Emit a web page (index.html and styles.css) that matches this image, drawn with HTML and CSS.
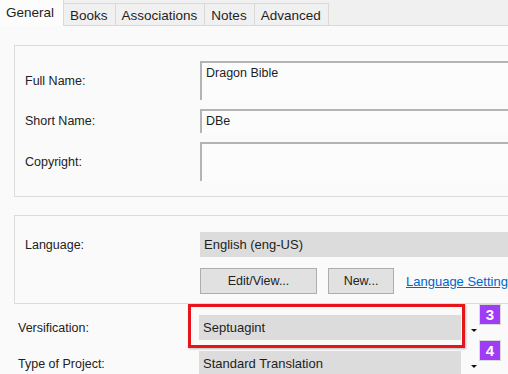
FILE: index.html
```html
<!DOCTYPE html>
<html lang="en">
<head>
  <meta charset="UTF-8" />
  <meta name="viewport" content="width=device-width, initial-scale=1.0"/>
  <title>Project Properties</title>
  <link rel="stylesheet" href="styles.css">
</head>
<body>
  <div class="window">
    <div class="tabs">
      <div class="tab active">General</div>
      <div class="tab">Books</div>
      <div class="tab">Associations</div>
      <div class="tab">Notes</div>
      <div class="tab">Advanced</div>
    </div>

    <div class="panel">
      <div class="group names">
        <div class="row">
          <label>Full Name:</label>
          <div class="textbox tall">Dragon Bible</div>
        </div>
        <div class="row">
          <label>Short Name:</label>
          <div class="textbox">DBe</div>
        </div>
        <div class="row">
          <label>Copyright:</label>
          <div class="textbox tall"></div>
        </div>
      </div>

      <div class="group language">
        <div class="row">
          <label>Language:</label>
          <div class="readonly">English (eng-US)</div>
        </div>
        <div class="row">
          <span></span>
          <div class="actions">
            <button class="btn edit">Edit/View...</button>
            <button class="btn">New...</button>
            <a href="#" class="link">Language Settings</a>
          </div>
        </div>
      </div>

      <div class="row outside">
        <label>Versification:</label>
        <div class="combo">
          <div class="readonly field highlight">Septuagint</div>
          <span class="arrow"></span>
          <span class="badge">3</span>
        </div>
      </div>
      <div class="row outside">
        <label>Type of Project:</label>
        <div class="combo">
          <div class="readonly field">Standard Translation</div>
          <span class="arrow"></span>
          <span class="badge">4</span>
        </div>
      </div>
    </div>
  </div>
</body>
</html>
```

FILE: styles.css
```css
* { box-sizing: border-box; }

html, body {
  margin: 0;
  width: 508px;
  height: 374px;
  overflow: hidden;
}

body {
  font-family: 'Liberation Sans', Arial, sans-serif;
  font-size: 12px;
  color: #1e1e1e;
  background: #fafafa;
}

.window {
  width: 508px;
}

/* tab strip */
.tabs {
  display: flex;
  align-items: flex-end;
  height: 26px;
  background: #f0f0f0;
  border-bottom: 1px solid #d9d9d9;
}

.tab {
  height: 23px;
  padding: 4px 7px 0 6px;
  margin-bottom: -1px;
  border: 1px solid #d9d9d9;
  border-left: none;
  background: #f0f0f0;
  font-size: 13.5px;
}

.tab.active {
  height: 26px;
  padding: 5px 9px 0 6px;
  background: #fcfcfc;
  border: none;
  border-right: 1px solid #d9d9d9;
  font-size: 13.5px;
}

/* page body */
.panel {
  padding: 19px 0 0 14px;
}

.group {
  width: 560px;
  border: 1px solid #dcdcdc;
  padding: 15px 0 15px 10px;
}

.group.language {
  margin-top: 18px;
  padding: 16px 0 9px 10px;
}

.row {
  display: grid;
  grid-template-columns: 175px 1fr;
  align-items: center;
}

.group.names .row + .row { margin-top: 9px; }
.group.language .row + .row { margin-top: 11px; }

label {
  font-size: 12.5px;
  color: #222;
}

.textbox {
  height: 24px;
  padding: 3px 4px;
  background: #fcfcfc;
  border-top: 2px solid #b4b4b4;
  border-left: 2px solid #b4b4b4;
  font-size: 12.5px;
}

.textbox.tall { height: 39px; }

.readonly {
  height: 25px;
  padding: 5px 4px;
  background: #dcdcdc;
  font-size: 13px;
}

.actions {
  display: flex;
  align-items: center;
}

.btn {
  height: 26px;
  width: 66px;
  margin-right: 12px;
  background: #e1e1e1;
  border: 1px solid #adadad;
  font-family: inherit;
  font-size: 12.5px;
  color: #222;
}

.btn.edit { width: 117px; margin-right: 11px; }

.link {
  color: #0066cc;
  text-decoration: underline;
  font-size: 13px;
  white-space: nowrap;
}

/* rows below the groups */
.row.outside {
  grid-template-columns: 181px 1fr;
  margin-left: 4px;
}

.group + .row.outside { margin-top: 11px; }

.row.outside + .row.outside { margin-top: 11px; }

.combo {
  position: relative;
  display: flex;
  align-items: center;
}

.combo .field {
  width: 262px;
}

.combo .highlight { position: relative; }

.combo .highlight::after {
  content: "";
  position: absolute;
  left: -11px;
  top: -11px;
  right: -4px;
  bottom: -8px;
  border: 3px solid #e8141c;
  box-shadow: 1px 1px 2px rgba(0, 0, 0, 0.25);
}

.arrow {
  width: 0;
  height: 0;
  margin: 6px 0 0 10px;
  border-left: 3px solid transparent;
  border-right: 3px solid transparent;
  border-top: 3px solid #111;
}

.badge {
  margin: -26px 0 0 2px;
  width: 22px;
  height: 21px;
  background: #a03cf5;
  border: 1px solid #d8d8d8;
  color: #fff;
  font-weight: bold;
  font-size: 15px;
  line-height: 19px;
  text-align: center;
}
```
